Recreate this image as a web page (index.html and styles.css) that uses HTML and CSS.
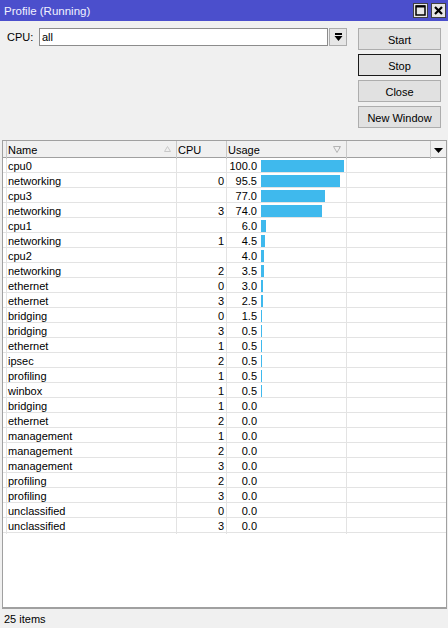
FILE: index.html
```html
<!DOCTYPE html>
<html lang="en">
<head>
    <meta charset="UTF-8">
    <title>Profile (Running)</title>
    <link rel="stylesheet" href="styles.css">
</head>
<body>
    <div class="titlebar">
        <span class="title">Profile (Running)</span>
        <div class="win-btns">
            <span class="win-btn">
                <svg width="11" height="11" viewBox="0 0 11 11"><rect x="1" y="1" width="9" height="9" fill="none" stroke="#000" stroke-width="1.5"/><line x1="1" y1="1.5" x2="10" y2="1.5" stroke="#000" stroke-width="2"/></svg>
            </span>
            <span class="win-btn">
                <svg width="11" height="11" viewBox="0 0 11 11"><path d="M2 2 L9 9 M9 2 L2 9" stroke="#000" stroke-width="2.2"/></svg>
            </span>
        </div>
    </div>

    <div class="toolbar">
        <div class="cpu-field">
            <span class="label">CPU:</span>
            <div class="combo">all</div>
            <span class="combo-btn">
                <svg width="9" height="9" viewBox="0 0 9 9"><rect x="1" y="0" width="7" height="2" fill="#000"/><polygon points="0.5,3 8.5,3 4.5,8" fill="#000"/></svg>
            </span>
        </div>
        <div class="actions">
            <button>Start</button>
            <button class="default">Stop</button>
            <button>Close</button>
            <button>New Window</button>
        </div>
    </div>

    <div class="list">
        <div class="list-head">
            <div class="cell"></div>
            <div class="cell">Name
                <svg class="sort" width="7" height="6" viewBox="0 0 7 6"><polygon points="3.5,0.5 6.5,5.5 0.5,5.5" fill="none" stroke="#c8c8c8"/></svg>
            </div>
            <div class="cell">CPU</div>
            <div class="cell">Usage
                <svg class="sort" width="8" height="7" viewBox="0 0 8 7"><polygon points="0.5,0.5 7.5,0.5 4,6.5" fill="none" stroke="#b4b4b4"/><line x1="6.5" y1="1" x2="6.5" y2="3" stroke="#b4b4b4"/></svg>
            </div>
            <div class="cell"></div>
            <div class="cell menu">
                <svg width="9" height="5" viewBox="0 0 9 5"><polygon points="0,0 9,0 4.5,5" fill="#000"/></svg>
            </div>
        </div>
        <div class="list-body" id="rows"></div>
    </div>

    <div class="statusbar">25 items</div>

    <script>
        const items = [
            ['cpu0', '', 100.0], ['networking', 0, 95.5], ['cpu3', '', 77.0], ['networking', 3, 74.0],
            ['cpu1', '', 6.0], ['networking', 1, 4.5], ['cpu2', '', 4.0], ['networking', 2, 3.5],
            ['ethernet', 0, 3.0], ['ethernet', 3, 2.5], ['bridging', 0, 1.5], ['bridging', 3, 0.5],
            ['ethernet', 1, 0.5], ['ipsec', 2, 0.5], ['profiling', 1, 0.5], ['winbox', 1, 0.5],
            ['bridging', 1, 0.0], ['ethernet', 2, 0.0], ['management', 1, 0.0], ['management', 2, 0.0],
            ['management', 3, 0.0], ['profiling', 2, 0.0], ['profiling', 3, 0.0],
            ['unclassified', 0, 0.0], ['unclassified', 3, 0.0]
        ];

        const rows = document.getElementById('rows');
        items.forEach(([name, cpu, usage]) => {
            const row = document.createElement('div');
            row.className = 'row';
            // bar is 83px at 100%, thin sliver for anything above zero
            const w = usage > 0 ? Math.max(1, Math.round(usage * 0.83)) : 0;
            row.innerHTML = `
                <div class="cell"></div>
                <div class="cell">${name}</div>
                <div class="cell num">${cpu}</div>
                <div class="cell usage">
                    <span class="usage-val">${usage.toFixed(1)}</span>
                    <span class="bar" style="width:${w}px"></span>
                </div>
                <div class="cell last"></div>
            `;
            rows.appendChild(row);
        });
    </script>
</body>
</html>
```

FILE: styles.css
```css
* {
    box-sizing: border-box;
}
body {
    margin: 0;
    width: 448px;
    height: 628px;
    background: #f0f0f0;
    font-family: "Liberation Sans", Arial, sans-serif;
    font-size: 11px;
    color: #000;
    overflow: hidden;
}

/* window title */
.titlebar {
    height: 21px;
    background: #4b4fcc;
    display: flex;
    align-items: center;
    justify-content: space-between;
    padding: 0 2px 0 4px;
}
.title {
    color: #f2f2ff;
    font-size: 11.5px;
    padding-top: 1px;
}
.win-btns {
    display: flex;
    gap: 3px;
}
.win-btn {
    width: 15px;
    height: 15px;
    background: #e6e6e6;
    border: 1px solid #404040;
    display: flex;
    align-items: center;
    justify-content: center;
}

/* top area */
.toolbar {
    display: flex;
    padding: 7px 0 12px 0;
}
.cpu-field {
    display: flex;
    align-items: flex-start;
    padding-left: 7px;
}
.label {
    width: 32px;
    line-height: 19px;
}
.combo {
    width: 289px;
    height: 18px;
    background: #fff;
    border: 1px solid #8c8c8c;
    padding-left: 2px;
    line-height: 17px;
}
.combo-btn {
    width: 18px;
    height: 18px;
    margin-left: 1px;
    background: #e6e6e6;
    border: 1px solid #adadad;
    display: flex;
    align-items: center;
    justify-content: center;
}
.actions {
    display: flex;
    flex-direction: column;
    gap: 4px;
    margin-left: 11px;
}
.actions button {
    width: 83px;
    height: 22px;
    padding: 1px 0 0 0;
    background: #e1e1e1;
    border: 1px solid #adadad;
    font-family: inherit;
    font-size: 11px;
    color: #000;
}
.actions button.default {
    border: 1px solid #1a1a1a;
}

/* profile list */
.list {
    width: 445px;
    height: 469px;
    margin-left: 2px;
    background: #fff;
    border: 1px solid #a0a0a0;
    border-bottom: 2px solid #a0a0a0;
}
.list-head,
.row {
    display: grid;
    grid-template-columns: 4px 170px 50px 120px 84px 1fr;
}
.row {
    grid-template-columns: 4px 170px 50px 120px 1fr;
}
.list-head {
    height: 17px;
    background: #f0f0f0;
    border-bottom: 1px solid #a0a0a0;
}
.list-head .cell {
    border-right: 1px solid #c8c8c8;
    padding-left: 1px;
    line-height: 18px;
    position: relative;
}
.list-head .cell:last-child {
    border-right: 0;
}
.sort {
    position: absolute;
    right: 5px;
    top: 5px;
}
.list-head .menu {
    display: flex;
    align-items: center;
    justify-content: center;
    padding-left: 0;
}
.row {
    height: 15px;
    border-bottom: 1px solid #e3e3e3;
}
.row .cell {
    border-right: 1px solid #e3e3e3;
    padding-left: 1px;
    line-height: 16px;
    white-space: nowrap;
}
.row .cell.last {
    border-right: 0;
}
.row .num {
    text-align: right;
    padding-right: 2px;
}
.usage {
    display: flex;
    align-items: center;
}
.usage-val {
    width: 29px;
    text-align: right;
}
.bar {
    height: 12px;
    margin-left: 4px;
    background: #3fb9ed;
}

.statusbar {
    height: 18px;
    padding: 2px 0 0 4px;
    line-height: 16px;
}
```
